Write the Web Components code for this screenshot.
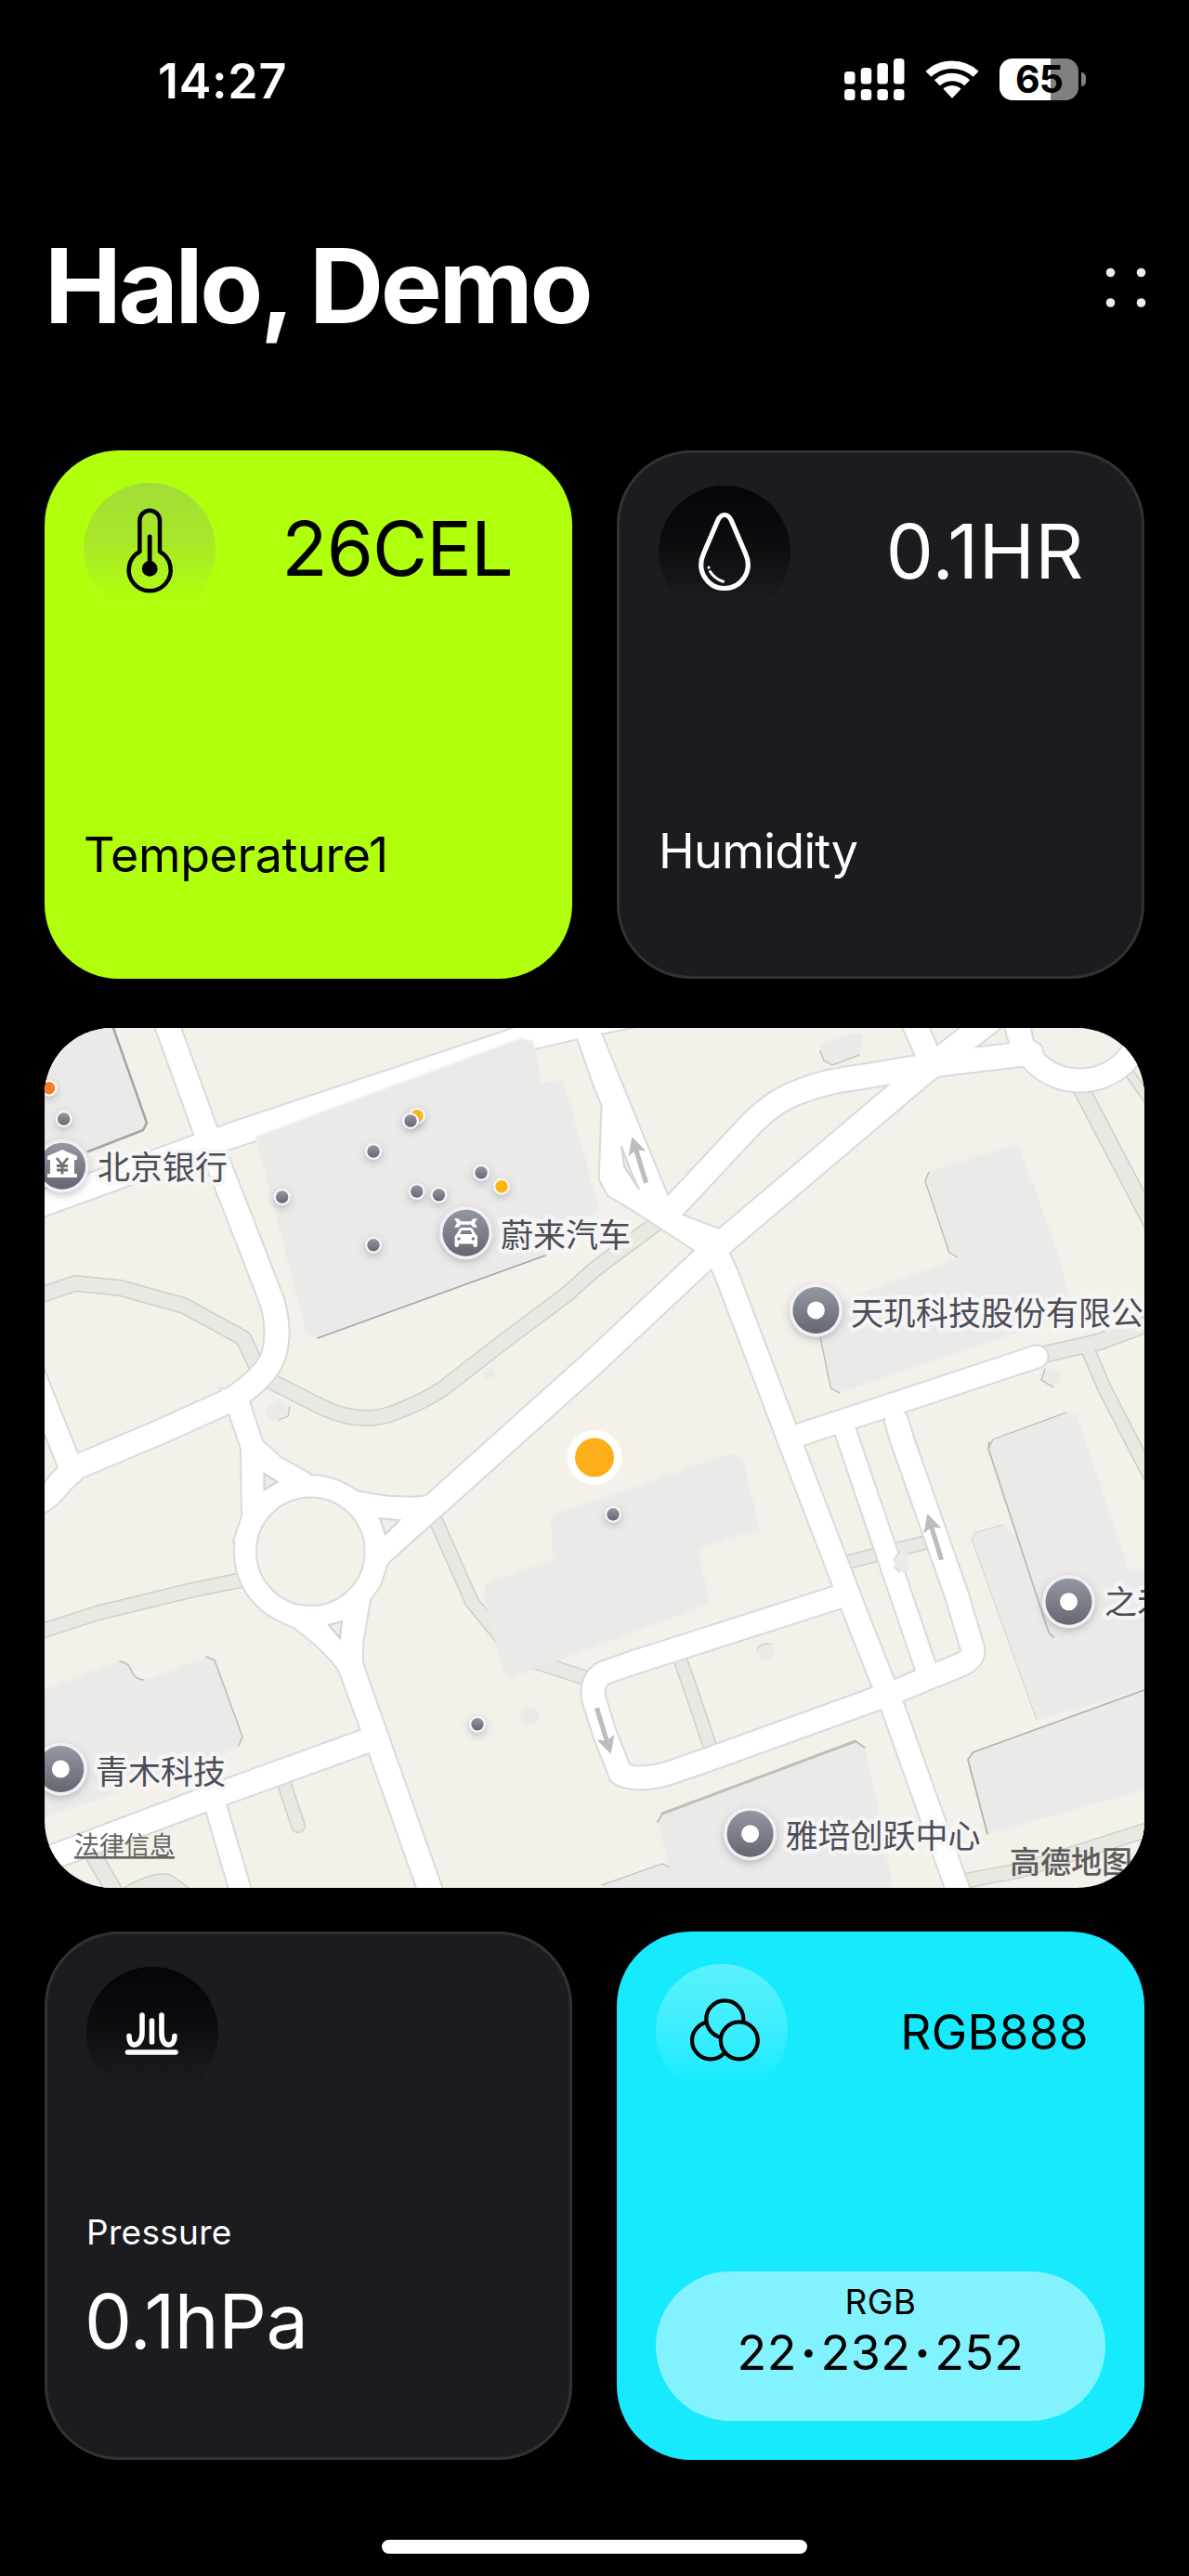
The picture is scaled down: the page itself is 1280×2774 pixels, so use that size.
<!DOCTYPE html>
<html lang="en">
<head>
<meta charset="utf-8">
<title>Halo, Demo</title>
<style>
html,body{margin:0;padding:0;background:#000}
body{font-family:Inter,"Noto Sans CJK SC",sans-serif;color:#fff}
</style>
</head>
<body>
<home-screen></home-screen>

<template id="t-home">
<style>
:host{display:flex;flex-direction:column;width:1280px;height:2774px;background:#000;overflow:hidden}
main{display:grid;grid-template-columns:568px 568px;column-gap:48px;padding:0 48px}
.wide{grid-column:1/3;margin:53px 0 47px}
</style>
<status-bar></status-bar>
<page-header>Halo, Demo</page-header>
<main>
<sensor-card variant="lime"><icon-thermo slot="icon"></icon-thermo><span slot="value" style="letter-spacing:-.9px">26CEL</span><span slot="label" style="letter-spacing:-.4px">Temperature1</span></sensor-card>
<sensor-card variant="dark"><icon-drop slot="icon"></icon-drop><span slot="value" style="letter-spacing:.5px">0.1HR</span><span slot="label" style="letter-spacing:-.6px">Humidity</span></sensor-card>
<area-map class="wide"></area-map>
<sensor-card variant="dark" stacked><icon-pressure slot="icon"></icon-pressure><span slot="small">Pressure</span><span slot="big" style="letter-spacing:-.5px;margin-left:-2px">0.1hPa</span></sensor-card>
<sensor-card variant="cyan" pill><icon-rgb slot="icon"></icon-rgb><span slot="value" style="letter-spacing:.3px;margin-right:-2px">RGB888</span><rgb-pill slot="pill"><span slot="name">RGB</span>22<b>·</b>232<b>·</b>252</rgb-pill></sensor-card>
</main>
<home-indicator></home-indicator>
</template>

<template id="t-status">
<style>
:host{display:flex;justify-content:space-between;align-items:flex-start;height:240px;padding:56px 111px 0 170px;box-sizing:border-box}
.time{font-size:52px;font-weight:600;line-height:64px;letter-spacing:.7px}
.icons{display:flex;align-items:center;gap:22px;padding-top:7px}
svg{display:block}
.bat{display:flex;align-items:center;gap:3px}
.cell{width:85px;height:45px;border-radius:14px;background:linear-gradient(90deg,#fff 55px,#808080 55px);color:#000;font-size:41px;font-weight:700;line-height:45px;text-align:center;letter-spacing:-1px}
.nub{width:5px;height:15px;border-radius:0 8px 8px 0;background:#808080}
</style>
<span class="time">14:27</span>
<div class="icons">
<svg width="65" height="45" fill="#fff"><rect x="0" y="14" width="11.5" height="13.5" rx="3.5"/><rect x="17.7" y="10" width="11.5" height="17.5" rx="3.5"/><rect x="35.4" y="5" width="11.5" height="22.5" rx="3.5"/><rect x="53" y="0" width="11.5" height="27.5" rx="3.5"/><rect x="0" y="33" width="11.5" height="12" rx="3.5"/><rect x="17.7" y="33" width="11.5" height="12" rx="3.5"/><rect x="35.4" y="33" width="11.5" height="12" rx="3.5"/><rect x="53" y="33" width="11.5" height="12" rx="3.5"/></svg>
<svg width="58" height="45" viewBox="0 0 58 45" fill="#fff" stroke="#fff" stroke-width="1.6" stroke-linejoin="round"><path d="M1.5 13.8A41 41 0 0 1 56.5 13.8L51.6 18.7A34.5 34.5 0 0 0 6.400 18.700Z"/><path d="M11 23.300A27.500 27.500 0 0 1 47 23.300L42.200 28.200A20.500 20.500 0 0 0 15.800 28.200Z"/><path d="M20.500 32.600A14 14 0 0 1 37.500 32.600L29 41.600Z"/></svg>
<div class="bat"><div class="cell">65</div><div class="nub"></div></div>
</div>
</template>

<template id="t-header">
<style>
:host{display:flex;justify-content:space-between;align-items:flex-start;height:245px;padding:0 46px 0 48px;box-sizing:border-box}
h1{margin:-2px 0 0;font-size:111px;line-height:140px;font-weight:700;letter-spacing:-3.4px}
svg{margin-top:48px}
</style>
<h1><slot></slot></h1>
<svg width="44" height="44" fill="#ececec"><circle cx="5.500" cy="5.500" r="4.800"/><circle cx="38.500" cy="5.500" r="4.800"/><circle cx="5.500" cy="38" r="4.800"/><circle cx="38.500" cy="38" r="4.800"/></svg>
</template>

<template id="t-card">
<style>
:host{display:flex;flex-direction:column;width:568px;height:569px;box-sizing:border-box;border-radius:80px;padding:35px 42px 0}
:host([variant=lime]){background:#b0ff0c;color:#000;--disc:linear-gradient(#a3dc38,#a8e828 45%,#b0ff0c 90%)}
:host([variant=dark]){background:#1c1b20;border:3px solid #323235;color:#fff;--disc:linear-gradient(#04040a,#0d0d10 45%,#1c1b20 90%)}
:host([variant=cyan]){background:#18eafe;color:#000;--disc:linear-gradient(#5cf1fd,#3ceefe 50%,#18eafe 90%)}
.head{display:flex;justify-content:space-between;align-items:center;height:142px}
.disc{width:142px;height:142px;border-radius:50%;background:var(--disc)}
.value{font-size:81px;line-height:90px;padding-right:20px}
:host([variant=lime]) .value{padding-right:22px}
:host([pill]) .value{font-size:51.500px;padding-top:3px}
.label{font-size:52px;line-height:64px;margin-top:227px}
:host([variant=dark]) .label{margin-top:220px}
.small,.big,.pill{display:none}
:host([stacked]) .label,:host([stacked]) .value,:host([pill]) .label{display:none}
:host([stacked]) .small{display:block;font-size:37px;line-height:44px;margin-top:122px;letter-spacing:.3px}
:host([stacked]) .big{display:block;font-size:81px;line-height:96px;margin-top:26px}
:host([pill]) .pill{display:block;margin-top:189px}
</style>
<div class="head"><div class="disc"><slot name="icon"></slot></div><div class="value"><slot name="value"></slot></div></div>
<div class="label"><slot name="label"></slot></div>
<div class="small"><slot name="small"></slot></div>
<div class="big"><slot name="big"></slot></div>
<div class="pill"><slot name="pill"></slot></div>
</template>

<template id="t-pill">
<style>
:host{display:flex;flex-direction:column;align-items:center;height:161px;border-radius:81px;background:#82f2fe;color:#000;font-size:52px;line-height:62px;padding-top:11px;box-sizing:border-box}
.n{font-size:37px;line-height:44px;letter-spacing:.5px}
.v{margin-top:2px;letter-spacing:.4px}
::slotted(b){margin:0 4px}
</style>
<div class="n"><slot name="name"></slot></div><div class="v"><slot></slot></div>
</template>

<template id="t-indicator">
<style>:host{display:block;width:458px;height:15px;border-radius:8px;background:#fff;margin:86px auto 0}</style>
</template>

<script>
const define=(name,html)=>customElements.define(name,class extends HTMLElement{
  connectedCallback(){
    if(this.shadowRoot)return;
    const root=this.attachShadow({mode:'open'});
    if(html[0]==='#')root.append(document.querySelector(html).content.cloneNode(true));
    else root.innerHTML=html;
  }
});
const icon=(name,body)=>define(name,`<style>:host,svg{display:block;width:142px;height:142px}</style><svg viewBox="0 0 142 142" fill="none" stroke-linecap="round" stroke-linejoin="round">${body}</svg>`);

icon('icon-thermo','<g stroke="#000"><path stroke-width="4.500" d="M60.400 74V40.500a10.800 10.800 0 0 1 21.600 0V74a22.500 22.500 0 1 1-21.600 0Z"/><path stroke-width="4.800" d="M71.200 58V92"/></g><circle cx="71.200" cy="92.400" r="8.400" fill="#000"/>');
icon('icon-drop','<g stroke="#fff"><path stroke-width="5.200" d="M71 31.500C67 31.500 65 34.500 63.500 38L48.500 73C40 92 53 110.500 71 110.500S102 92 93.500 73L78.500 38C77 34.500 75 31.500 71 31.500Z"/><path stroke-width="3" d="M55.500 92.500Q60.500 100.500 69.500 103.200M54 88v.2"/></g>');
icon('icon-pressure','<g stroke="#fff" stroke-width="5.600"><path d="M60 52V71.500C60 80 55 84 51.500 84C48 84 46 80 46 74.500M70.500 58V81M81 52V71.500C81 80 84.500 84 88.500 84C92.500 84 95 80 95 74.500M44.500 92H96"/></g>');
icon('icon-rgb','<mask id="a"><rect width="142" height="142" fill="#fff"/><circle cx="74.300" cy="59.300" r="20" fill="#000"/><circle cx="89.800" cy="82.300" r="20" fill="#000"/></mask><mask id="b"><rect width="142" height="142" fill="#fff"/><circle cx="89.800" cy="82.300" r="20" fill="#000"/></mask><g stroke="#000" stroke-width="4.200"><circle mask="url(#a)" cx="59" cy="82.300" r="20"/><circle mask="url(#b)" cx="74.300" cy="59.300" r="20"/><circle cx="89.800" cy="82.300" r="20"/></g>');

/* ---- map ---- */
const roads=[
 [25,'M170 1077L181 1107L222 1220L268 1337L293 1402Q302 1432 295 1458Q289 1478 262 1498L250 1507L170 1543L82 1580L66 1595Q52 1614 40 1618'],
 [24,'M30 1465L78 1585'],
 [26,'M30 1302L222 1232L560 1119L634 1102L720 1085'],
 [25,'M723 1302L810 1209Q835 1184 862 1175Q890 1164 925 1160L1003 1147L1110 1134'],
 [26,'M1100 1072L990 1158L768 1346L640 1466L466 1622L440 1640'],
 [25,'M972 1075L1004 1147'],
 [24,'M1092 1080L1102 1135'],
 [24,'M768 1342L782 1372L852 1557L880 1630L926 1750L961 1838L1040 2060'],
 [23,'M858 1546L1116 1461'],
 [22,'M911 1544L998 1800'],
 [24,'M965 1530L971 1550L1030 1718L1047 1775Q1049 1785 1036 1792L958 1824L770 1892L718 1910Q685 1919 668 1910L651 1867L639 1829Q636 1808 651 1801L680 1791L905 1719'],
 [25,'M374 1780L380 1800L470 2055'],
 [25,'M391 1876L231 1934L40 2006'],
 [22,'M231 1941L266 2060']
];
const areas=['M620 1112L640 1170L648.500 1190L645.700 1270L655 1287L682 1303L751 1348L790 1330L732 1308L718.500 1288L645.700 1110Z',
 'M238 1496L260 1560L261 1633L252 1660L290 1660L334 1600L333 1587.300L302 1570L282 1551.700L269 1512L262 1498Z',
 'M386 1606.700L417 1611.700L445 1612.800L458 1611.500L476 1630L417 1683L409 1706.700L398 1723L370 1690L360 1600Z',
 'M304 1746.700L315.500 1751.700Q345 1772 365 1798L384 1850L408 1850L389.400 1791.700L390.500 1766.700L398 1723L370 1710L310 1725Z'];
const greys=[
 [16,'M40 1396L81 1382L130 1387L198 1406L262 1441L278 1475'],
 [16,'M285 1484L346 1515Q385 1534 420 1523Q455 1510 476 1496L543 1444L610 1394L640 1367L706 1318'],
 [15,'M40 1758L105 1737L208 1712L262 1701'],
 [14,'M466 1630L508 1725L534 1757L548 1775'],
 [15,'M575 1789L634 1808'],
 [14,'M303 1912L321 1966'],
 [17,'M96 1990L128 2045'],
 [14,'M730 1780L766 1885'],
 [14,'M905 1684L1004 1659'],
 [17,'M1118 1460L1183 1445L1240 1424'],
 [14,'M1171 1453L1189 1495L1238 1590'],
 [17,'M1160 1165L1240 1318'],
 [15,'M1036 2026L1099 2014L1240 1969'],
 [9,'M1212 1150L1240 1190'],
 [22,'M128 2050Q165 2025 180 2030L200 2045']
];
const buildings=['M40 1100H120L158 1209L154 1217L95 1240L40 1262Z',
 'M275 1224L560 1118L574 1121L583 1166L606 1163L642 1290L645 1300L587 1352L342 1441L330 1436Z',
 'M885 1123L908 1115L929 1113L926 1137L896 1147L887 1142L883 1132Z',
 'M1000 1262L1092 1232L1098 1235L1141 1357L1149 1390V1417L904 1500L894.500 1495L883 1440L908 1400L1030 1355L1022 1349L996 1272Z',
 'M1046 1657L1051 1650L1080 1642L1128 1690L1240 1690V1817L1116 1852Z',
 'M1064 1560L1069 1550L1148 1521L1158 1523L1172 1560L1218 1697L1240 1760V1790L1130 1762Z',
 'M1042 1895L1047.600 1887L1240 1817V1925L1063 1975Z',
 'M709 1962L713 1953L921 1875L931 1882L946 1947L962 2040H720V2010Z',
 'M640 2033L713 2007L722 2011V2040Z',
 'M593 1632L787 1565L799 1570L818 1647L751 1668L764 1727L549 1807L541 1797L520 1717L524 1705L595 1680Z',
 'M40 1822L130 1788L139.500 1793L145 1805L155 1810L224 1784L233 1788L261 1872L256 1882L100 1940L40 1960Z',
 'M283 1519L300 1507L312 1516L310 1525L297 1529L288 1526Z','M519 1478L531 1473L535 1482L524 1486Z',
 'M1124 1478L1134 1473L1142 1480L1138 1491L1128 1493L1122 1488Z'];
const edges=[[2.500,'M122 1107L158 1209L154 1217L95 1240','#a5a5a5'],[1.600,'M342 1441L587 1352','#a5a5a8'],[1.300,'M883 1132L887 1142L896 1147L925 1136'],
 [1.300,'M1000 1262L996 1272L1022 1349L1031 1354'],[1.300,'M883 1440L894.500 1495L904 1500'],[1.300,'M1148 1521L1069 1550L1064 1560'],[1.800,'M1065 1553L1064 1560L1129 1758L1134 1763'],
 [1,'M1046 1657L1051 1650L1080 1642M1046 1657L1116 1852','#d2d1cd'],[1.800,'M1063 1975L1042 1895L1047.600 1887L1240 1817','#b3b2ae'],
 [3,'M713 1953L921 1875','#bfbeb8'],[1.600,'M708 1962L713 1953M921 1875L931 1882'],[1.300,'M648 2030L713 2007L720 2010'],
 [1.500,'M129 1789Q139 1791 141 1798Q145 1809 155 1809M222 1784L231 1788L261 1870L257 1880'],
 [1,'M312 1514L310 1525L300 1529'],[1.300,'M1125 1474L1121 1486L1134 1494']];
const dots=[[68.700,1205],[402,1240],[303.700,1289],[448.700,1283],[472.400,1286.700],[518,1262.700],[402,1340.700],[514,1856.700],[660,1630.700]];
const dot=(x,y,f)=>`<g filter="url(#sh)"><circle cx="${x}" cy="${y}" r="9" fill="#f7f7f9"/></g><circle cx="${x}" cy="${y}" r="6.700" fill="${f||'url(#pin)'}"/>`;
const pin=(x,y,inner)=>`<g filter="url(#sh)"><circle cx="${x}" cy="${y}" r="28.500" fill="#f1f1f4"/></g><circle cx="${x}" cy="${y}" r="25" fill="url(#pin)"/>${inner||`<circle cx="${x}" cy="${y}" r="9.500" fill="#fff"/>`}`;
const label=(x,y,t)=>`<text x="${x}" y="${y}" font-size="35" font-weight="400" fill="#4c4c57" stroke="#f7f6f6" stroke-width="9" stroke-opacity=".9" stroke-linejoin="round" paint-order="stroke">${t}</text>`;
const arrow=(x,y,a)=>`<path transform="translate(${x} ${y}) rotate(${a})" fill="#bdbdc0" d="M0 -26L10 -7L2.600 -10V26H-2.600V-10L-10 -7Z"/>`;
define('area-map',`<style>
:host{display:block;width:1184px;height:926px;border-radius:72px;overflow:hidden;background:#f3f1ea}
svg{display:block;font-family:"Noto Sans CJK SC",sans-serif}
</style>
<svg width="1184" height="926" viewBox="48 1107 1184 926" fill="none" stroke-linecap="round" stroke-linejoin="round">
<defs><linearGradient id="pin" x1="0" y1="0" x2="0" y2="1"><stop stop-color="#9498a1"/><stop offset="1" stop-color="#656672"/></linearGradient>
<filter id="sh" x="-50%" y="-50%" width="200%" height="200%"><feDropShadow dx="0" dy="3" stdDeviation="4" flood-color="#55556a" flood-opacity=".35"/></filter>
<filter id="soft"><feGaussianBlur stdDeviation="1"/></filter></defs>
${greys.map(([w,d])=>`<path d="${d}" stroke="#cfcfc8" stroke-width="${w+2}"/>`).join('')}
${greys.map(([w,d])=>`<path d="${d}" stroke="#e8e9e3" stroke-width="${w-1}"/>`).join('')}
<g stroke="#dbd9dc">${roads.map(([w,d])=>`<path d="${d}" stroke-width="${w+4}"/>`).join('')}${areas.map(d=>`<path d="${d}" stroke-width="4"/>`).join('')}<circle cx="334.300" cy="1670.700" r="70" stroke-width="27"/><circle cx="1162.500" cy="1095" r="68.500" stroke-width="28"/></g>
<g stroke="#fff">${roads.map(([w,d])=>`<path d="${d}" stroke-width="${w}"/>`).join('')}${areas.map(d=>`<path d="${d}" fill="#fff" stroke="none"/>`).join('')}<circle cx="334.300" cy="1670.700" r="70" stroke-width="23"/><circle cx="1162.500" cy="1095" r="68.500" stroke-width="24"/></g>
<circle cx="334.300" cy="1670.700" r="58.300" fill="#f3f1ea" stroke="#dbd9dc" stroke-width="2"/>
<g fill="#eeeeeb" stroke="#d6d5d6" stroke-width="2.200" stroke-linejoin="miter"><path d="M284.500 1587V1604L298.500 1596Z"/><path d="M409 1635L430 1637L415 1652Z"/><path d="M354 1750L368 1746L366 1764Z"/><path d="M669 1234L672 1256L688 1281L678 1259Z"/></g>
<g fill="#ebeae9" filter="url(#soft)">${buildings.map(d=>`<path d="${d}"/>`).join('')}<circle cx="570" cy="1848" r="10"/><circle cx="824" cy="1778" r="10"/><path d="M962 1680L968 1671L977 1669V1692L969 1693L963 1688Z"/></g>
<path d="M962 1680L968 1671M963 1688L969 1693M815 1776Q820 1768 831 1771" stroke="#d0cfca" stroke-width="1.200"/>
${edges.map(([w,d,c])=>`<path d="${d}" stroke="${c||'#bbbab5'}" stroke-width="${w}"/>`).join('')}
${arrow(688,1249,-17)}${arrow(1006,1655,-17)}${arrow(650,1864,163)}
${dot(449,1201.700,'#fbb918')}${dot(442,1207)}${dot(540,1277.700,'#fbb40e')}${dot(52.600,1171.700,'#f97c2a')}${dots.map(p=>dot(...p)).join('')}
${pin(67,1255.700,`<path fill="#fff" d="M51 1245L67 1238L83 1245V1249H80V1264H83V1268H51V1264H54V1249H51Z"/><path stroke="#70717c" stroke-width="2.800" stroke-linecap="butt" d="M61 1247L67 1254.500L73 1247M67 1254V1264.500M61 1255.500H73M61 1260H73"/>`)}
${pin(501.500,1327.700,`<path stroke="#fff" stroke-width="3.600" d="M494 1317H509"/><path fill="#fff" d="M489 1312L494 1312.500L497 1317L494 1321.500L489 1322L492 1317ZM514 1312L509 1312.500L506 1317L509 1321.500L514 1322L511 1317Z"/><path fill="#fff" fill-rule="evenodd" d="M489.500 1332Q490 1330 491.500 1329L494.500 1323.500Q495.500 1322 497.500 1322H506Q508 1322 509 1323.500L512 1329Q514 1330 514 1332V1341Q514 1343 511.500 1343Q509.500 1343 509.500 1341V1339.500H494V1341Q494 1343 491.500 1343Q489.500 1343 489.500 1341ZM495 1329H508.500L506.500 1325H497ZM492.300 1334a1.700 1.700 0 1 0 3.400 0a1.700 1.700 0 1 0 -3.400 0ZM507.600 1334a1.700 1.700 0 1 0 3.400 0a1.700 1.700 0 1 0 -3.400 0Z"/>`)}
${pin(878.400,1411)}${pin(65.300,1905)}${pin(1150.500,1724.700)}${pin(807.600,1974.700)}
${label(105,1270,'北京银行')}${label(539,1343,'蔚来汽车')}${label(916,1427,'天玑科技股份有限公')}${label(103,1921,'青木科技')}${label(1189,1738,'之禾')}${label(845.500,1990,'雅培创跃中心')}
<text x="80" y="1997" font-size="27" fill="#66665f" text-decoration="underline">法律信息</text>
<text x="1087" y="2017" font-size="33" font-weight="500" fill="#5d5b5a">高德地图</text>
<circle cx="640" cy="1569.500" r="29.500" fill="#fff"/><circle cx="640" cy="1569.500" r="21" fill="#ffae1b"/>
</svg>`);

define('status-bar','#t-status');
define('page-header','#t-header');
define('sensor-card','#t-card');
define('rgb-pill','#t-pill');
define('home-indicator','#t-indicator');
define('home-screen','#t-home');
</script>
</body>
</html>
